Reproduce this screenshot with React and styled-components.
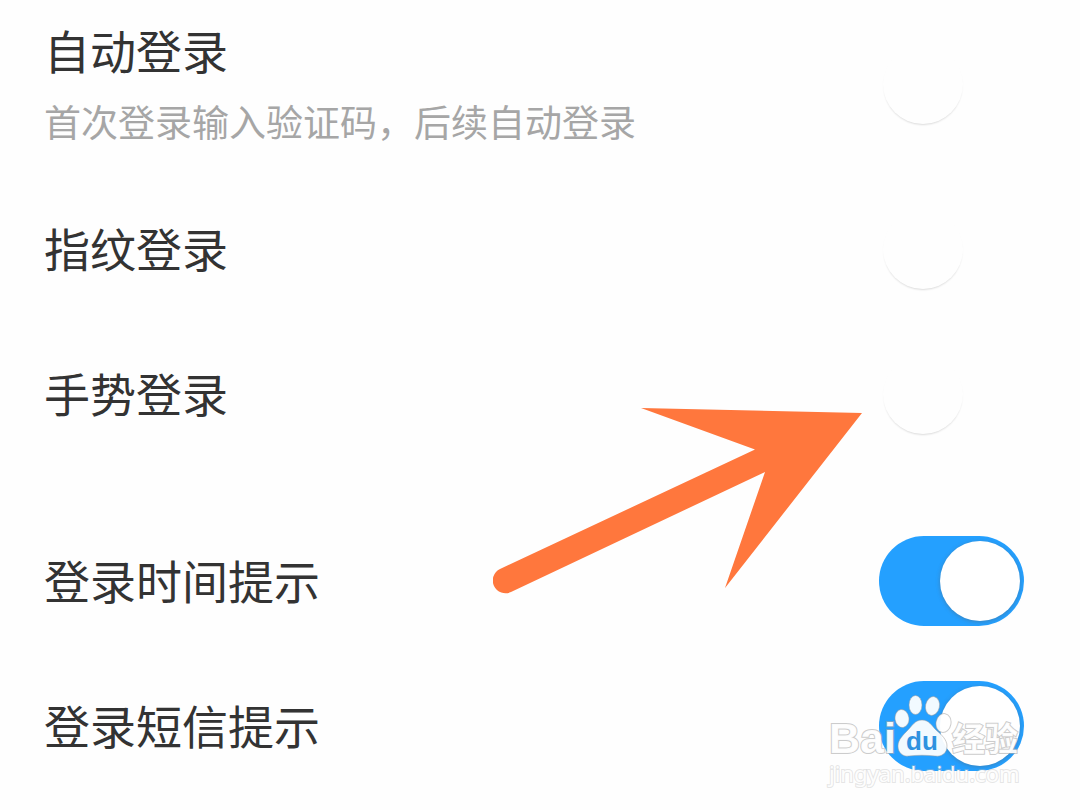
import React from "react";
import styled, { createGlobalStyle } from "styled-components";

const GlobalStyle = createGlobalStyle`
  * { box-sizing: border-box; }
  body {
    margin: 0;
    background: #fefefe;
    font-family: "Noto Sans CJK SC", sans-serif;
  }
`;

const Page = styled.main`
  position: relative;
  min-height: 100vh;
  overflow: hidden;
`;

const Group = styled.section`
  display: flex;
  flex-direction: column;
  margin-bottom: 42px;

  &:last-of-type {
    margin-bottom: 0;
  }
`;

const Row = styled.label`
  display: flex;
  align-items: center;
  justify-content: space-between;
  min-height: ${(p) => (p.$tall ? 176 : 145)}px;
  padding: 0 56px ${(p) => (p.$tall ? 8 : 0)}px 44px;
`;

const Copy = styled.span`
  display: flex;
  flex-direction: column;
  gap: 10px;
  padding-bottom: 4px;
`;

const Title = styled.span`
  font-size: 46px;
  line-height: 68px;
  color: #333;
`;

const Hint = styled.span`
  font-size: 37px;
  line-height: 56px;
  color: #a6a6a6;
`;

const Toggle = styled.input`
  appearance: none;
  flex: none;
  display: flex;
  align-items: center;
  width: 145px;
  height: 90px;
  margin: 0;
  padding: 0 4px;
  border-radius: 45px;
  background: transparent;

  &::before {
    content: "";
    width: 80px;
    height: 80px;
    border-radius: 50%;
    background: #fefefe;
    box-shadow: 0 2px 2px -1px rgba(0, 0, 0, 0.14);
  }

  &:checked {
    justify-content: flex-end;
    background: #24a0ff;
  }

  &:checked::before {
    background: #fff;
    box-shadow: 0 1px 4px rgba(90, 90, 90, 0.4);
  }
`;

const Arrow = styled.svg`
  position: absolute;
  top: 407px;
  right: 218px;
  width: 369px;
  height: 187px;
  pointer-events: none;
`;

const Watermark = styled.div`
  position: absolute;
  top: 693px;
  right: 57px;
  width: 194px;
  pointer-events: none;
  color: rgba(255, 255, 255, 0.94);
`;

const Brand = styled.div`
  display: flex;
  align-items: flex-end;
  height: 68px;
`;

const BrandLatin = styled.span`
  width: 65px;
  font: bold 43px/46px "Liberation Sans", sans-serif;
  -webkit-text-stroke: 2px rgba(170, 170, 170, 0.6);
  paint-order: stroke fill;
`;

const Paw = styled.svg`
  flex: none;
  width: 58px;
  height: 68px;
`;

const BrandHan = styled.span`
  font-size: 33px;
  line-height: 48px;
  font-weight: 700;
  -webkit-text-stroke: 2px rgba(170, 170, 170, 0.6);
  paint-order: stroke fill;
`;

const Site = styled.div`
  font: 22px/24px "Noto Sans", sans-serif;
  white-space: nowrap;
  -webkit-text-stroke: 2px rgba(190, 190, 190, 0.4);
  paint-order: stroke fill;
`;

const groups = [
  [
    { title: "自动登录", hint: "首次登录输入验证码，后续自动登录" },
    { title: "指纹登录" },
    { title: "手势登录" },
  ],
  [
    { title: "登录时间提示", on: true },
    { title: "登录短信提示", on: true },
  ],
];

function SettingRow({ title, hint, on }) {
  return (
    <Row $tall={Boolean(hint)}>
      <Copy>
        <Title>{title}</Title>
        {hint && <Hint>{hint}</Hint>}
      </Copy>
      <Toggle type="checkbox" role="switch" defaultChecked={Boolean(on)} />
    </Row>
  );
}

export default function App() {
  return (
    <>
      <GlobalStyle />
      <Page>
        {groups.map((rows, i) => (
          <Group key={i}>
            {rows.map((row) => (
              <SettingRow key={row.title} {...row} />
            ))}
          </Group>
        ))}

        <Arrow viewBox="493 407 369 187" aria-hidden="true">
          <path
            fill="#ff773d"
            d="M641 408 L862 413 L725 588 L765 472 L511 592 A12.5 12.5 0 0 1 500 569 L755 449.500 Z"
          />
        </Arrow>

        <Watermark>
          <Brand>
            <BrandLatin>Bai</BrandLatin>
            <Paw viewBox="894 693 58 68" aria-hidden="true">
              <g fill="#fff" fillOpacity="0.94" stroke="#9a9a9a" strokeOpacity="0.5">
                <ellipse cx="902" cy="718.500" rx="7" ry="9" transform="rotate(-8 902 718.500)" />
                <ellipse cx="915.500" cy="705" rx="6.500" ry="9.500" />
                <ellipse cx="932.500" cy="706" rx="7" ry="9.500" transform="rotate(12 932.500 706)" />
                <ellipse cx="943.500" cy="723" rx="7.500" ry="9.500" transform="rotate(10 943.500 723)" />
                <path d="M922 720 C929 720 932 726 936 730 C942 735 947 740 947 746 C947 753 942 757 935 756 C926 755 918 755 909 756 C902 757 898 752 898 746 C898 740 903 735 908 730 C912 726 915 720 922 720 Z" />
              </g>
              <text
                x="906"
                y="750"
                fill="#2f92df"
                fontFamily="Liberation Sans, sans-serif"
                fontWeight="700"
                fontSize="26"
              >
                du
              </text>
            </Paw>
            <BrandHan>经验</BrandHan>
          </Brand>
          <Site>jingyan.baidu.com</Site>
        </Watermark>
      </Page>
    </>
  );
}
